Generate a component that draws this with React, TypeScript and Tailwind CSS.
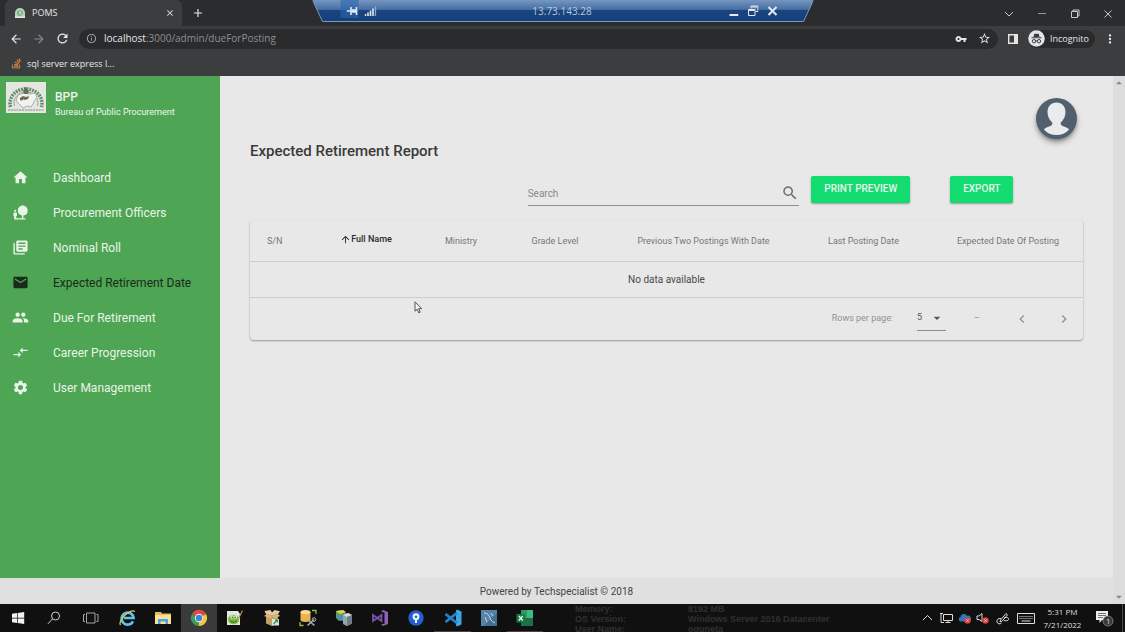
import type { ReactNode } from "react";
import {
  MdHome,
  MdNaturePeople,
  MdLibraryBooks,
  MdEmail,
  MdPeople,
  MdCompareArrows,
  MdSettings,
  MdSearch,
  MdArrowUpward,
  MdArrowDropDown,
  MdArrowDropUp,
  MdChevronLeft,
  MdChevronRight,
  MdArrowBack,
  MdArrowForward,
  MdRefresh,
  MdInfoOutline,
  MdClose,
  MdAdd,
  MdVpnKey,
  MdStarBorder,
  MdMoreVert,
} from "react-icons/md";

function LeafIcon() {
  return (
    <svg width="12" height="12" viewBox="0 0 12 12" aria-hidden="true">
      <path d="M1 10.5V6a5 5 0 0 1 10 0v4.500z" fill="#b9d3bb" />
      <circle cx="6" cy="6" r="3" fill="#7fae84" />
      <path d="M6 4v2.500l1.500.8" stroke="#eef5ee" strokeWidth="1" fill="none" />
      <rect x="1" y="9.500" width="10" height="1.500" fill="#dfeadf" />
    </svg>
  );
}

function RemoteBar() {
  return (
    <div className="absolute top-0 left-1/2 h-[22px] w-[501px] -translate-x-1/2">
      <svg className="absolute inset-0 h-full w-full" viewBox="0 0 501 22" aria-hidden="true">
        <defs>
          <linearGradient id="remote" x1="0" x2="0" y1="0" y2="1">
            <stop offset="0" stopColor="#7596bf" />
            <stop offset="0.44" stopColor="#466fa6" />
            <stop offset="0.46" stopColor="#1d447c" />
            <stop offset="1" stopColor="#12407f" />
          </linearGradient>
        </defs>
        <path d="M0 0h501l-10 21.500H10z" fill="url(#remote)" />
        <path d="M28 0h18v18H28z" fill="#2c68ad" opacity=".6" />
        <path d="M0 0l10 21.500h481L501 0" fill="none" stroke="#7f97b8" strokeWidth="1" />
      </svg>
      <div className="relative flex h-full items-center pr-9 pl-[34px] text-[#e3e9f1]">
        <button type="button" aria-label="Pin" className="flex">
          <svg width="12" height="10" viewBox="0 0 12 10">
            <path d="M0 5h4M4.500 1v8M10 1v8" stroke="currentColor" strokeWidth="1.600" />
            <path d="M5 3.300h5v3.400H5z" fill="currentColor" />
          </svg>
        </button>
        <svg className="ml-[6px]" width="12" height="10" viewBox="0 0 12 10" aria-hidden="true">
          <path d="M1 10V8M3.500 10V6.500M6 10V4.500M8.500 10V2.500" stroke="currentColor" strokeWidth="1.600" />
          <path d="M11 10V0" stroke="#8ea7c9" strokeWidth="1.400" />
        </svg>
        <span className="flex-1 pl-5 text-center font-['Open_Sans','Noto_Sans',sans-serif] text-[10px] text-[#b9c8dc]">
          13.73.143.28
        </span>
        <button type="button" aria-label="Minimize session" className="flex">
          <svg width="10" height="12" viewBox="0 0 10 12">
            <path d="M1 10h9" stroke="currentColor" strokeWidth="2" />
          </svg>
        </button>
        <button type="button" aria-label="Restore session" className="ml-[9px] flex">
          <svg width="11" height="12" viewBox="0 0 11 12">
            <path d="M3.500 3.500V1h7v5.500H8M1 4.500h6.500V10.500H1zM1 5.500h6M4 2h6" fill="none" stroke="currentColor" strokeWidth="1" />
          </svg>
        </button>
        <button type="button" aria-label="Close session" className="ml-[9px] flex">
          <svg width="10" height="10" viewBox="0 0 10 10">
            <path d="M1 1l8 8M9 1L1 9" stroke="currentColor" strokeWidth="2" />
          </svg>
        </button>
      </div>
    </div>
  );
}

function BrowserChrome() {
  return (
    <header className="relative bg-[#3c3d3f] font-['Open_Sans','Noto_Sans',sans-serif] text-[#e6e6e6]">
      <div className="flex h-[26px] items-end bg-[#2a2c2e]">
        <div className="ml-[5px] flex h-[26px] w-[177px] items-center rounded-t-md bg-[#3c3d3f] pr-[7px] pl-[9px]">
          <LeafIcon />
          <span className="ml-[6px] flex-1 text-[9px]">POMS</span>
          <button type="button" aria-label="Close tab">
            <MdClose size={10} />
          </button>
        </div>
        <button type="button" aria-label="New tab" className="ml-[9px] flex h-[26px] items-center">
          <MdAdd size={14} />
        </button>
        <div className="ml-auto flex h-[24px] items-center gap-[23px] pr-3 text-[#c9c9c9]">
          <button type="button" aria-label="Search tabs">
            <svg width="10" height="10" viewBox="0 0 10 10">
              <path d="M1 3l4 4 4-4" fill="none" stroke="currentColor" />
            </svg>
          </button>
          <button type="button" aria-label="Minimize">
            <svg width="10" height="10" viewBox="0 0 10 10">
              <path d="M1 4.500h8" stroke="#9a9a9a" />
            </svg>
          </button>
          <button type="button" aria-label="Restore">
            <svg width="10" height="10" viewBox="0 0 10 10">
              <path d="M1.500 2.500h6v6h-6zM3 2V1h6v6H8" fill="none" stroke="currentColor" />
            </svg>
          </button>
          <button type="button" aria-label="Close window">
            <svg width="10" height="10" viewBox="0 0 10 10">
              <path d="M1.500 1.500l7 7M8.500 1.500l-7 7" stroke="currentColor" />
            </svg>
          </button>
        </div>
      </div>
      <RemoteBar />
      <div className="flex h-[25px] items-center pr-2 pl-[9px]">
        <button type="button" aria-label="Back">
          <MdArrowBack size={14} />
        </button>
        <button type="button" aria-label="Forward" className="ml-[9px] text-[#858687]">
          <MdArrowForward size={14} />
        </button>
        <button type="button" aria-label="Reload" className="ml-[9px]">
          <MdRefresh size={15} />
        </button>
        <div className="ml-[9px] flex h-5 flex-1 items-center rounded-full bg-[#292b2c] pr-[7px] pl-[7px]">
          <MdInfoOutline size={11} className="text-[#a9aaab]" />
          <span className="ml-[7px] flex-1 text-[10px] text-[#8d8f91]">
            <span className="text-[#e8e8e8]">localhost</span>:3000/admin/dueForPosting
          </span>
          <button type="button" aria-label="Passwords">
            <MdVpnKey size={12} />
          </button>
          <button type="button" aria-label="Bookmark this page" className="ml-[11px]">
            <MdStarBorder size={13} />
          </button>
        </div>
        <button type="button" aria-label="Side panel" className="ml-[10px]">
          <svg width="10" height="10" viewBox="0 0 10 10">
            <path d="M0.700 0.700h8.600v8.600H0.700z" fill="none" stroke="currentColor" strokeWidth="1.400" />
            <path d="M6 0h4v10H6z" fill="currentColor" />
          </svg>
        </button>
        <button type="button" className="ml-[10px] flex h-[18px] items-center rounded-full bg-[#292b2c] pr-[6px] text-[9px]">
          <svg width="17" height="17" viewBox="0 0 17 17" aria-hidden="true">
            <circle cx="8.500" cy="8.500" r="8.300" fill="#e3e4e5" />
            <path d="M5.500 7l.8-3.300h4.400l.8 3.300zM3.500 7.300h10v1h-10z" fill="#3c3d3f" />
            <circle cx="6" cy="11.200" r="1.700" fill="none" stroke="#3c3d3f" strokeWidth="1" />
            <circle cx="11" cy="11.200" r="1.700" fill="none" stroke="#3c3d3f" strokeWidth="1" />
            <path d="M7.700 11h1.600" stroke="#3c3d3f" />
          </svg>
          <span className="ml-[5px]">Incognito</span>
        </button>
        <button type="button" aria-label="Menu" className="ml-[8px]">
          <MdMoreVert size={14} />
        </button>
      </div>
      <div className="flex h-[25px] items-center pl-[11px]">
        <a href="#bookmark" className="flex items-center text-[9px]">
          <svg width="11" height="11" viewBox="0 0 11 11" aria-hidden="true">
            <path d="M1.500 6.500v3.500h7V6.500" fill="none" stroke="#a9805c" strokeWidth="1.200" />
            <path d="M3 8.300h4.200M3.200 6.300l4 .6M4 4l3.700 1.700M5.800 1.800l2.800 2.900M8 .5l1.300 3.300" stroke="#d9813c" strokeWidth="1.200" />
          </svg>
          <span className="ml-[5px]">sql server express l...</span>
        </a>
      </div>
    </header>
  );
}

const navItems = [
  { label: "Dashboard", Icon: MdHome },
  { label: "Procurement Officers", Icon: MdNaturePeople },
  { label: "Nominal Roll", Icon: MdLibraryBooks },
  { label: "Expected Retirement Date", Icon: MdEmail, active: true },
  { label: "Due For Retirement", Icon: MdPeople },
  { label: "Career Progression", Icon: MdCompareArrows },
  { label: "User Management", Icon: MdSettings },
];

function BureauLogo() {
  return (
    <svg width="40" height="31" viewBox="0 0 40 31" role="img" aria-label="BPP logo">
      <rect width="40" height="31" fill="#e4e6e0" />
      <path d="M4.500 25A16 14.500 0 1 1 35.500 25" fill="none" stroke="#5f8a6a" strokeWidth="3.400" strokeDasharray="1.800 1" />
      <path d="M8.500 24A12 11 0 1 1 31.500 24" fill="none" stroke="#93a596" strokeWidth="1" />
      <path d="M10 19l2-6 6-2 5 1 6-1 2 4-3 5-3 5-4-1-4 2-3-3z" fill="#f1f1ee" stroke="#9b9f9b" strokeWidth="0.800" />
      <path d="M18.500 6l1.500-1.500 1 2.500 2 2-1 3h-4l-1-3z" fill="#6a6f5c" />
      <path d="M14 16l3-2 3 1 3-1-1 3-3 1-3-1-2 1z" fill="#7b6350" />
      <circle cx="15.500" cy="17" r="1.500" fill="#49755a" />
      <path d="M2 28h36" stroke="#9ea69c" strokeWidth="1.500" strokeDasharray="2 0.800" />
    </svg>
  );
}

function Sidebar() {
  return (
    <aside className="w-[220px] shrink-0 bg-[#4ea553] text-[#eef6ee]">
      <div className="flex h-[84px] items-start pt-[6px] pl-[6px]">
        <BureauLogo />
        <div className="ml-[9px] pt-[7px]">
          <p className="text-[12px] leading-4 font-medium">BPP</p>
          <p className="text-[9px] leading-[14px]">Bureau of Public Procurement</p>
        </div>
      </div>
      <nav>
        <ul className="flex flex-col">
          {navItems.map(({ label, Icon, active }) => (
            <li key={label}>
              <a
                href="#nav"
                aria-current={active ? "page" : undefined}
                className={
                  active
                    ? "flex h-[35px] items-center pl-[12px] text-[#1a2b1b]"
                    : "flex h-[35px] items-center pl-[12px] text-[#e9f4e9]"
                }
              >
                <Icon size={17} />
                <span className="ml-[24px] text-[12px]">{label}</span>
              </a>
            </li>
          ))}
        </ul>
      </nav>
    </aside>
  );
}

function Avatar() {
  return (
    <button type="button" aria-label="Account" className="h-[41px] w-[41px] rounded-full bg-[#52606d] shadow-md shadow-black/40">
      <svg viewBox="0 0 41 41" className="h-full w-full">
        <path
          d="M20.500 4.500c-5.500 0-9 4-9 9.500 0 4.500 2 8 4.800 10.500.4 2.500-1 3.300-3.800 4.300-2 .7-3.700 1.500-4.500 2.600 3 3.600 7.500 5.600 12.500 5.600s9.500-2 12.500-5.600c-.8-1.100-2.500-1.900-4.500-2.600-2.800-1-4.200-1.800-3.800-4.300 2.800-2.500 4.800-6 4.800-10.500 0-5.500-3.500-9.500-9-9.500z"
          fill="#e9ebec"
        />
      </svg>
    </button>
  );
}

const headerCell = "p-0 pt-[2px] text-center font-normal text-[#777]";

function ReportTable() {
  return (
    <section className="mt-[14px] rounded-sm shadow-[0_1px_2px_rgba(0,0,0,0.35)]">
      <table className="w-full table-fixed border-collapse text-[9px]">
        <thead>
          <tr className="h-[41px] border-b border-[#cdcdcd]">
            <th className="w-[57px] p-0 pt-[2px] pl-[17px] text-left font-normal text-[#777]">S/N</th>
            <th className="w-[118px] p-0 pt-[2px] font-medium text-[#2b2b2b]">
              <button type="button" className="inline-flex items-center">
                <MdArrowUpward size={11} />
                Full Name
              </button>
            </th>
            <th className={`${headerCell} w-[72px]`}>Ministry</th>
            <th className={`${headerCell} w-[116px]`}>Grade Level</th>
            <th className={`${headerCell} w-[181px]`}>Previous Two Postings With Date</th>
            <th className={`${headerCell} w-[139px]`}>Last Posting Date</th>
            <th className={`${headerCell} w-[150px]`}>Expected Date Of Posting</th>
          </tr>
        </thead>
        <tbody>
          <tr className="h-[36px] border-b border-[#cdcdcd]">
            <td colSpan={7} className="p-0 text-center text-[10px] text-[#4a4a4a]">
              No data available
            </td>
          </tr>
        </tbody>
      </table>
      <div className="flex h-[42px] items-center justify-end pr-[11px] text-[9px] text-[#929292]">
        <label htmlFor="rows">Rows per page:</label>
        <div className="ml-[24px] flex h-[24px] w-[29px] items-center border-b border-[#8d8d8d] text-[#555]">
          <select id="rows" defaultValue="5" className="w-[12px] appearance-none bg-transparent text-[9px]">
            <option>5</option>
            <option>10</option>
            <option>15</option>
          </select>
          <MdArrowDropDown size={16} />
        </div>
        <span className="ml-[28px]">–</span>
        <button type="button" aria-label="Previous page" className="ml-[34px]">
          <MdChevronLeft size={16} />
        </button>
        <button type="button" aria-label="Next page" className="ml-[26px]">
          <MdChevronRight size={16} />
        </button>
      </div>
    </section>
  );
}

function ReportPage() {
  return (
    <main className="flex-1 bg-[#e8e8e8] pr-[30px] pl-[30px]">
      <div className="flex h-[66px] justify-end pt-[22px] pr-[6px]">
        <Avatar />
      </div>
      <h1 className="text-[15px] leading-[18px] font-medium text-[#3a3a3a]">Expected Retirement Report</h1>
      <div className="mt-[15px] grid grid-cols-12 items-start">
        <div className="col-span-4 col-start-5 pr-[6px]">
          <div className="flex h-[31px] items-center border-b border-[#8f8f8f] pt-[6px]">
            <input
              type="search"
              aria-label="Search"
              placeholder="Search"
              className="min-w-0 flex-1 bg-transparent text-[10px] outline-none placeholder:text-[#8a8a8a]"
            />
            <MdSearch size={18} className="text-[#6d6d6d]" />
          </div>
        </div>
        <div className="col-span-2 pl-[6px]">
          <button type="button" className="h-[27px] rounded-xs bg-[#13dc71] px-[13px] pb-[2px] text-[10px] font-medium whitespace-nowrap text-[#e6f7ee] shadow-[0_1px_2px_rgba(0,0,0,0.35)]">
            PRINT PREVIEW
          </button>
        </div>
        <div className="col-span-2 pl-[6px]">
          <button type="button" className="h-[27px] rounded-xs bg-[#13dc71] px-[13px] pb-[2px] text-[10px] font-medium text-[#e6f7ee] shadow-[0_1px_2px_rgba(0,0,0,0.35)]">
            EXPORT
          </button>
        </div>
      </div>
      <ReportTable />
    </main>
  );
}

const taskIcons: { name: string; drawing: ReactNode; active?: boolean; running?: boolean }[] = [
  {
    name: "Start",
    drawing: <path d="M4 5.800l5-.7v4.600H4zM9.700 5l6.500-1v5.700H9.700zM4 10.400h5V15l-5-.7zM9.700 10.400h6.500V16l-6.500-.9z" fill="#f2f2f2" />,
  },
  {
    name: "Search",
    drawing: (
      <g fill="none" stroke="#cfcfcf" strokeWidth="1">
        <circle cx="11.500" cy="8" r="4" />
        <path d="M8.500 10.800L4 15.800" />
      </g>
    ),
  },
  {
    name: "Task View",
    drawing: <path d="M5.500 5h8.500v10H5.500zM4 6.500H2.500v7H4M15.500 6.500H17v7h-1.500" fill="none" stroke="#a5a5a5" />,
  },
  {
    name: "Internet Explorer",
    drawing: (
      <g fill="none">
        <path d="M16 13.300a6 6 0 1 1 .6-3.300H7" stroke="#5ec3ee" strokeWidth="2.600" />
        <path d="M3.500 17c-2-2 3-9.500 8-12.500 3-1.800 6-2.500 6-.5" stroke="#e9c64c" strokeWidth="1.300" />
      </g>
    ),
  },
  {
    name: "File Explorer",
    drawing: (
      <g>
        <path d="M2 4h6l1 1.500h9V16H2z" fill="#e6bd5c" />
        <path d="M2 7h16v9H2z" fill="#fae09a" />
        <path d="M5 16v-5h10v5h-2.500v-2.500h-5V16z" fill="#4aa5dc" />
      </g>
    ),
  },
  {
    name: "Google Chrome",
    active: true,
    drawing: (
      <g>
        <path d="M10 10L3 6A8 8 0 0 1 17 6z" fill="#de4b3e" />
        <path d="M10 10L17 6A8 8 0 0 1 10 18z" fill="#f4c63a" />
        <path d="M10 10v8A8 8 0 0 1 3 6z" fill="#3d9c57" />
        <circle cx="10" cy="10" r="4.200" fill="#eeeeee" />
        <circle cx="10" cy="10" r="3.200" fill="#3f7fe0" />
      </g>
    ),
  },
  {
    name: "Notepad++",
    drawing: (
      <g>
        <path d="M2 3h11l2 3v11H2z" fill="#e2e8dc" />
        <ellipse cx="8.500" cy="11.500" rx="5.500" ry="4.800" fill="#78bb3a" />
        <circle cx="7" cy="9" r="1.700" fill="#e8efe0" />
        <circle cx="10.500" cy="9" r="1.700" fill="#e8efe0" />
        <circle cx="7.300" cy="9.200" r=".8" fill="#2f5521" />
        <circle cx="10.200" cy="9.200" r=".8" fill="#2f5521" />
        <path d="M5 13q3.500 2.500 7 0" stroke="#3c6b22" fill="none" />
        <path d="M17.500 2.500l-4 8" stroke="#b98b4b" strokeWidth="1.200" />
      </g>
    ),
  },
  {
    name: "Package Installer",
    drawing: (
      <g>
        <path d="M4 6l6 1.500L16 6v9.500L10 18l-6-2.500z" fill="#c69e68" />
        <path d="M4 6L2.500 3 8.500 2l1.500 2.500L12.500 2 18 3.300 16 6l-6 1.500z" fill="#e6ca9c" />
        <path d="M2 8l3-2 5 1.500-1.500 3zM18 8l-2-2-6 1.500 2 3z" fill="#d8b581" />
        <path d="M10 11h7v6.500h-7z" fill="#dbe6d8" />
        <path d="M11.500 16l4-4M13 12h2.500v2.500" stroke="#39985a" strokeWidth="1.300" fill="none" />
      </g>
    ),
  },
  {
    name: "SQL Server Management Studio",
    drawing: (
      <g>
        <path d="M2.500 4v8c0 1 2 2 5 2s5-1 5-2V4z" fill="#e9b44d" />
        <ellipse cx="7.500" cy="4" rx="5" ry="2" fill="#f7dd92" />
        <path d="M2 14v3.500h3.500M14 2.500h4V6" stroke="#8fbf43" strokeWidth="1.300" fill="none" />
        <path d="M9.500 17.500l6.500-6M10 12l6.500 5.500" stroke="#aaaeb2" strokeWidth="1.600" />
        <circle cx="16" cy="11.500" r="1.800" fill="none" stroke="#aaaeb2" />
      </g>
    ),
  },
  {
    name: "SQL Server Configuration",
    drawing: (
      <g>
        <path d="M2 3l7-1 3 3v6l-7 2-3-3z" fill="#5a9e55" />
        <path d="M2 3l7-1 3 2-6 2z" fill="#e9cb58" />
        <path d="M3 6l6 2v5l-4-1z" fill="#4d8ec0" />
        <path d="M9 7l5-2 4 2v8.500L13 18l-4-2z" fill="#97a2aa" />
        <path d="M9 7l5-2 4 2-5 2z" fill="#d5dadd" />
        <path d="M13 9l5-2v8.500L13 18z" fill="#707c86" />
      </g>
    ),
  },
  {
    name: "Visual Studio",
    drawing: (
      <g>
        <path d="M13 2l5 2v12l-5 2-2-1.500 3.500-.8V4.500L11 3.700z" fill="#8c62bd" />
        <path d="M3 7l8.500 6V7L3 13z" fill="none" stroke="#7d50b0" strokeWidth="1.800" />
      </g>
    ),
  },
  {
    name: "Sourcetree",
    drawing: (
      <g>
        <circle cx="10" cy="10" r="7.700" fill="#2260d0" />
        <circle cx="10" cy="8.700" r="3.400" fill="#eef3fb" />
        <circle cx="10" cy="8.700" r="1.300" fill="#2260d0" />
        <path d="M9 11h2v4H9z" fill="#eef3fb" />
      </g>
    ),
  },
  {
    name: "Visual Studio Code",
    running: true,
    drawing: (
      <g>
        <path d="M14 1.500L18.500 3.500v13L14 18.500l-1-1V2.500z" fill="#3ba6e8" />
        <path d="M14 5L2.500 14M14 15L2.500 6" stroke="#2287ca" strokeWidth="2.800" />
      </g>
    ),
  },
  {
    name: "MySQL Workbench",
    drawing: (
      <g>
        <path d="M2 2h16v16H2z" fill="#3f6f93" />
        <path d="M2 2h16v3L5 18H2z" fill="#5583a6" />
        <path d="M5 5c4 0 5 2 6 5s3 4 5 5M12 5l2 3M6 9l2 5" stroke="#c3d5e2" fill="none" />
      </g>
    ),
  },
  {
    name: "Excel",
    running: true,
    drawing: (
      <g>
        <path d="M6 2h12v16H6z" fill="#2f9a64" />
        <path d="M12 2h6v8h-6z" fill="#42b883" />
        <path d="M6 10h12v8H6z" fill="#1d6f45" />
        <path d="M1.500 6h8.500v8.500H1.500z" fill="#157a43" />
        <path d="M3.800 8l4 4.500M7.800 8l-4 4.500" stroke="#eaf5ee" strokeWidth="1.400" />
      </g>
    ),
  },
];

function itemClass(active?: boolean, running?: boolean) {
  if (active) return "flex h-7 flex-1 items-center justify-center bg-[#3a3a3a]";
  if (running) return "flex h-7 flex-1 items-center justify-center shadow-[inset_0_-1px_0_#4f4247]";
  return "flex h-7 flex-1 items-center justify-center";
}

function SystemTray() {
  return (
    <div className="ml-auto flex h-7 items-center font-['Open_Sans','Noto_Sans',sans-serif] text-[#dedede]">
      <button type="button" aria-label="Show hidden icons">
        <svg width="11" height="10" viewBox="0 0 11 10">
          <path d="M1 7l4.500-4.500L10 7" fill="none" stroke="currentColor" />
        </svg>
      </button>
      <svg className="ml-[7px]" width="13" height="12" viewBox="0 0 13 12" role="img" aria-label="Network">
        <path d="M3.500 2.500h9v6h-9zM8 8.500v2M5.500 10.500h5M1 1v4M0 1.500h3M1 5v5.500h3" fill="none" stroke="currentColor" />
      </svg>
      <svg className="ml-[5px]" width="13" height="12" viewBox="0 0 13 12" role="img" aria-label="OneDrive">
        <path d="M2.500 9.500a2.300 2.300 0 0 1 0-4.500 3.500 3.500 0 0 1 6.500-1.200 2.800 2.800 0 0 1 2 5.700z" fill="#2f76bd" />
        <circle cx="9.500" cy="8.500" r="3.200" fill="#d2453b" />
        <path d="M8.300 7.300l2.400 2.400M10.700 7.300L8.300 9.700" stroke="#f1dada" strokeWidth=".8" />
      </svg>
      <svg className="ml-[5px]" width="13" height="12" viewBox="0 0 13 12" role="img" aria-label="Volume">
        <path d="M1 4h2l3-2.500v8L3 7.500H1z" fill="none" stroke="currentColor" />
        <circle cx="9.500" cy="8.500" r="3.200" fill="#d2453b" />
        <path d="M8.300 7.300l2.400 2.400M10.700 7.300L8.300 9.700" stroke="#f1dada" strokeWidth=".8" />
      </svg>
      <svg className="ml-[7px]" width="13" height="13" viewBox="0 0 13 13" role="img" aria-label="Pen workspace">
        <path d="M4.500 8L10 1.500l1.500 1.300L6 9.300l-2 .5zM5 6.500C2 6 .5 8 1 10s3 2.500 4.500 1M8 6c3-1.500 5 0 4.500 1.500S9.500 9 8 8.500" fill="none" stroke="currentColor" />
      </svg>
      <svg className="ml-[8px]" width="18" height="11" viewBox="0 0 18 11" role="img" aria-label="Touch keyboard">
        <path d="M.5.5h17v10H.500z" fill="none" stroke="currentColor" />
        <path d="M2.500 3.500h13M2.500 5.500h13" stroke="currentColor" strokeDasharray="1 1" />
        <path d="M4.500 8h9" stroke="currentColor" />
      </svg>
      <div className="ml-[7px] w-[41px] text-center text-[8px] leading-[13px] whitespace-nowrap">
        <p>5:31 PM</p>
        <p>7/21/2022</p>
      </div>
      <button type="button" aria-label="Notifications, 1 new" className="relative ml-[13px] h-[18px] w-[18px]">
        <svg width="18" height="18" viewBox="0 0 18 18">
          <path d="M0 2h12v9H6l-2.500 3v-3H0z" fill="#ededed" />
          <path d="M2 4.500h8M2 6.500h8M2 8.500h5" stroke="#555" strokeWidth=".8" />
          <circle cx="12" cy="12" r="5" fill="#3a3a3a" stroke="#8c8c8c" strokeWidth=".8" />
        </svg>
        <span className="absolute top-[7px] left-[10px] text-[8px] leading-[10px]">1</span>
      </button>
      <span className="ml-2 h-7 w-[3px] border-l border-[#4b4b4b]" />
    </div>
  );
}

function Taskbar() {
  return (
    <footer className="flex h-7 items-center overflow-hidden bg-[#101010]">
      <div className="flex w-[543px] shrink-0">
        {taskIcons.map(({ name, drawing, active, running }) => (
          <button key={name} type="button" aria-label={name} className={itemClass(active, running)}>
            <svg width="20" height="20" viewBox="0 0 20 20">
              {drawing}
            </svg>
          </button>
        ))}
      </div>
      <dl className="ml-8 grid grid-cols-[113px_auto] self-start font-['Liberation_Sans',Arial,sans-serif] text-[9px] leading-[10px] font-bold whitespace-nowrap text-[#303030]">
        <dt>Memory:</dt>
        <dd>8192 MB</dd>
        <dt>OS Version:</dt>
        <dd>Windows Server 2016 Datacenter</dd>
        <dt>User Name:</dt>
        <dd>oguneta</dd>
      </dl>
      <SystemTray />
    </footer>
  );
}

export default function App() {
  return (
    <div className="flex min-h-screen flex-col bg-[#e8e8e8] font-[Roboto,'Noto_Sans',sans-serif]">
      <BrowserChrome />
      <div className="flex flex-1">
        <div className="flex flex-1 flex-col">
          <div className="relative flex flex-1">
            <Sidebar />
            <ReportPage />
            <svg className="absolute top-[225px] left-[414px]" width="9" height="13" viewBox="0 0 9 13" aria-hidden="true">
              <path d="M1 .8v9.400l2.200-2 1.500 3.600 1.500-.6-1.500-3.500h3z" fill="#f3f3f3" stroke="#444" strokeWidth=".9" />
            </svg>
          </div>
          <div className="flex h-[26px] items-center justify-center bg-[#e0e0e0] text-[10px] text-[#444]">
            Powered by Techspecialist © 2018
          </div>
        </div>
        <div className="flex w-3 flex-col items-center justify-between bg-[#dddddd] text-[#888]">
          <MdArrowDropUp size={14} />
          <MdArrowDropDown size={14} />
        </div>
      </div>
      <Taskbar />
    </div>
  );
}
